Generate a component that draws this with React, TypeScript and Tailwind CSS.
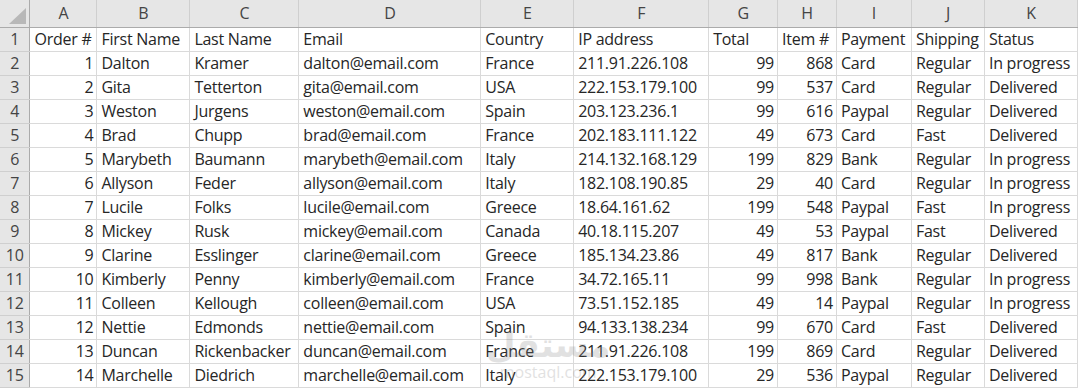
import React from "react";

const cols = [
  { l: "A", w: 67 },
  { l: "B", w: 93 },
  { l: "C", w: 109 },
  { l: "D", w: 182 },
  { l: "E", w: 93 },
  { l: "F", w: 135 },
  { l: "G", w: 69 },
  { l: "H", w: 59 },
  { l: "I", w: 75 },
  { l: "J", w: 73 },
  { l: "K", w: 93 },
];

const header = ["Order #", "First Name", "Last Name", "Email", "Country", "IP address", "Total", "Item #", "Payment", "Shipping", "Status"];

const data: (string | number)[][] = [
  [1, "Dalton", "Kramer", "dalton@email.com", "France", "211.91.226.108", 99, 868, "Card", "Regular", "In progress"],
  [2, "Gita", "Tetterton", "gita@email.com", "USA", "222.153.179.100", 99, 537, "Card", "Regular", "Delivered"],
  [3, "Weston", "Jurgens", "weston@email.com", "Spain", "203.123.236.1", 99, 616, "Paypal", "Regular", "Delivered"],
  [4, "Brad", "Chupp", "brad@email.com", "France", "202.183.111.122", 49, 673, "Card", "Fast", "Delivered"],
  [5, "Marybeth", "Baumann", "marybeth@email.com", "Italy", "214.132.168.129", 199, 829, "Bank", "Regular", "In progress"],
  [6, "Allyson", "Feder", "allyson@email.com", "Italy", "182.108.190.85", 29, 40, "Card", "Regular", "In progress"],
  [7, "Lucile", "Folks", "lucile@email.com", "Greece", "18.64.161.62", 199, 548, "Paypal", "Fast", "In progress"],
  [8, "Mickey", "Rusk", "mickey@email.com", "Canada", "40.18.115.207", 49, 53, "Paypal", "Fast", "Delivered"],
  [9, "Clarine", "Esslinger", "clarine@email.com", "Greece", "185.134.23.86", 49, 817, "Bank", "Regular", "Delivered"],
  [10, "Kimberly", "Penny", "kimberly@email.com", "France", "34.72.165.11", 99, 998, "Bank", "Regular", "In progress"],
  [11, "Colleen", "Kellough", "colleen@email.com", "USA", "73.51.152.185", 49, 14, "Paypal", "Regular", "In progress"],
  [12, "Nettie", "Edmonds", "nettie@email.com", "Spain", "94.133.138.234", 99, 670, "Card", "Fast", "Delivered"],
  [13, "Duncan", "Rickenbacker", "duncan@email.com", "France", "211.91.226.108", 199, 869, "Card", "Regular", "Delivered"],
  [14, "Marchelle", "Diedrich", "marchelle@email.com", "Italy", "222.153.179.100", 29, 536, "Paypal", "Regular", "Delivered"],
];

export default function App() {
  return (
    <div
      className="relative w-[1078px] h-[390px] overflow-hidden bg-white text-[#262626]"
      style={{ fontFamily: '"Open Sans", "Noto Sans", sans-serif' }}
    >
      <table className="table-fixed border-collapse text-[16px] leading-none tracking-[-0.25px]">
        <colgroup>
          <col style={{ width: 30 }} />
          {cols.map((c) => (
            <col key={c.l} style={{ width: c.w }} />
          ))}
        </colgroup>
        <thead>
          <tr className="h-[27px] bg-[#e6e6e6]">
            <th className="relative border-b border-r border-b-[#ababab] border-r-[#ababab] p-0">
              <svg className="absolute right-[3px] bottom-[3px]" width="17" height="16" viewBox="0 0 17 16">
                <polygon points="17,0 17,16 0,16" fill="#b8b8b8" />
              </svg>
            </th>
            {cols.map((c) => (
              <th
                key={c.l}
                className="border-b border-r border-b-[#ababab] border-r-[#cfcfcf] p-0 text-center font-normal text-[#444]"
              >
                {c.l}
              </th>
            ))}
          </tr>
        </thead>
        <tbody>
          {[header, ...data].map((row, ri) => (
            <tr key={ri} className="h-[24px]">
              <td className="border-r border-b border-r-[#ababab] border-b-[#cfcfcf] bg-[#e6e6e6] p-0 text-center text-[#444]">
                {ri + 1}
              </td>
              {row.map((v, ci) => (
                <td
                  key={ci}
                  className={`border-r border-b border-[#dadada] py-0 whitespace-nowrap overflow-visible ${
                    typeof v === "number" ? "text-right pr-[3px] pl-0" : "text-left pl-[4px] pr-0"
                  }`}
                >
                  {v}
                </td>
              ))}
            </tr>
          ))}
        </tbody>
      </table>
      <div className="pointer-events-none absolute left-[486px] top-[328px] flex flex-col items-center opacity-25">
        <div
          className="text-[34px] font-bold leading-none text-[#8a8a8a]"
          style={{ fontFamily: '"DejaVu Sans", sans-serif' }}
        >
          مستقل
        </div>
        <div className="mt-[2px] text-[16px] leading-none text-[#8a8a8a]">mostaql.com</div>
      </div>
    </div>
  );
}
